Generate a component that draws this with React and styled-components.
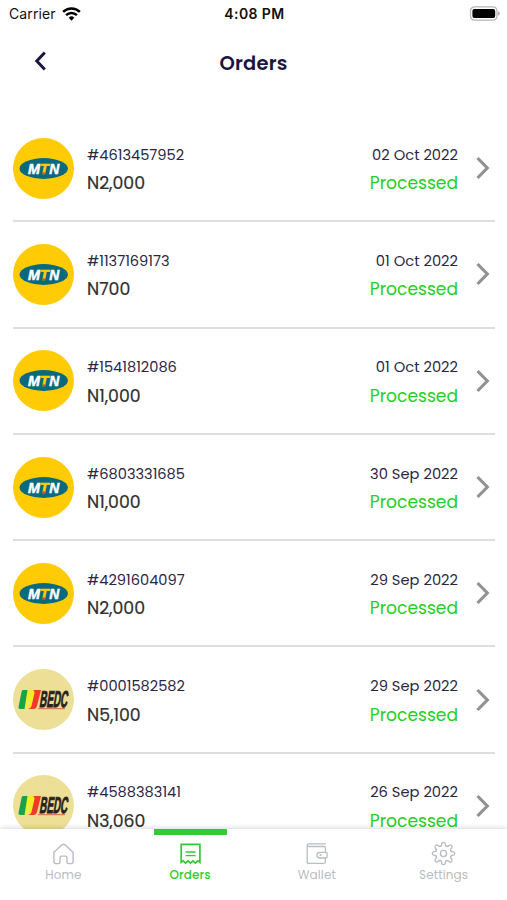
import React from "react";
import styled, { createGlobalStyle } from "styled-components";

const GlobalStyle = createGlobalStyle`
  * {
    box-sizing: border-box;
  }

  body {
    margin: 0;
    background-color: #fff;
    font-family: Poppins, Inter, "Open Sans", sans-serif;
  }
`

const Screen = styled.div`
  width: 507px;
  height: 900px;
  display: flex;
  flex-direction: column;
  overflow: hidden;
  background-color: #fff;
`

const StatusBar = styled.div`
  flex: 0 0 27px;
  display: grid;
  grid-template-columns: 1fr auto 1fr;
  align-items: center;
  padding: 0 7px 0 9px;
  color: #111;
  font-family: Inter, sans-serif;
  font-size: 14px;
`

const Carrier = styled.div`
  display: flex;
  align-items: center;
  gap: 6px;
  letter-spacing: 0.1px;
`

const Time = styled.div`
  font-weight: 600;
  letter-spacing: 0.4px;
`

const Battery = styled.div`
  display: flex;
  justify-content: flex-end;
`

const Header = styled.div`
  flex: 0 0 72px;
  display: grid;
  grid-template-columns: 1fr auto 1fr;
  align-items: center;
  padding: 0 34px;
`

const BackButton = styled.div`
  display: flex;
  margin-bottom: 4px;
  cursor: pointer;
`

const Title = styled.div`
  padding-top: 1px;
  color: #1a163d;
  font-size: 19.5px;
  font-weight: 600;
  letter-spacing: 0.2px;
`

const List = styled.div`
  flex: 1;
  min-height: 0;
  overflow: hidden;
  padding: 17px 12px 0 13px;
`

const Row = styled.div`
  height: 106.3px;
  display: flex;
  align-items: center;
  border-bottom: 2px solid #dedede;
`

const Logo = styled.div`
  flex: 0 0 61px;
  height: 61px;
  border-radius: 50%;
  background-color: ${(props) => props.$color};

  svg {
    display: block;
    overflow: visible;
  }
`

const Info = styled.div`
  flex: 1;
  display: flex;
  flex-direction: column;
  align-items: ${(props) => (props.$end ? "flex-end" : "flex-start")};
  padding: 2px 0 0 13px;
  line-height: 28.5px;
  white-space: nowrap;
`

const Detail = styled.div`
  color: #2a2745;
  font-size: ${(props) => (props.$date ? 14.7 : 14.6)}px;
`

const Amount = styled.div`
  color: #303030;
  font-size: 17.3px;
  -webkit-text-stroke: 0.2px #303030;
`

const Status = styled.div`
  color: #25cf25;
  font-size: 17.1px;
`

const Arrow = styled.div`
  flex: 0 0 37px;
  display: flex;
  padding-left: 18px;
`

const TabBar = styled.div`
  flex: 0 0 71px;
  display: grid;
  grid-template-columns: repeat(4, 1fr);
  position: relative;
  background-color: #fff;
  box-shadow: 0 -1px 5px rgba(0, 0, 0, 0.16);
`

const Tab = styled.div`
  display: flex;
  flex-direction: column;
  align-items: center;
  color: ${(props) => (props.$active ? "#2ecc32" : "#b9bcc3")};
  font-size: 12px;
  font-weight: ${(props) => (props.$active ? 500 : 400)};
  letter-spacing: 0.1px;
  line-height: 16px;
  cursor: pointer;

  &::before {
    content: "";
    width: 73px;
    height: 6px;
    margin-bottom: 6px;
    background-color: ${(props) => (props.$active ? "#30cb36" : "transparent")};
  }

  svg {
    margin-bottom: 1px;
  }
`

const orders = [
  { id: "#4613457952", amount: "N2,000", date: "02 Oct 2022", brand: "mtn" },
  { id: "#1137169173", amount: "N700", date: "01 Oct 2022", brand: "mtn" },
  { id: "#1541812086", amount: "N1,000", date: "01 Oct 2022", brand: "mtn" },
  { id: "#6803331685", amount: "N1,000", date: "30 Sep 2022", brand: "mtn" },
  { id: "#4291604097", amount: "N2,000", date: "29 Sep 2022", brand: "mtn" },
  { id: "#0001582582", amount: "N5,100", date: "29 Sep 2022", brand: "bedc" },
  { id: "#4588383141", amount: "N3,060", date: "26 Sep 2022", brand: "bedc" },
]

const MtnLogo = () => (
  <svg width="61" height="61" viewBox="0 0 61 61">
    <ellipse cx="30.7" cy="30.5" rx="24.2" ry="10.4" fill="#08697f" />
    <g fontFamily="Liberation Sans, sans-serif" fontWeight="700" fontStyle="italic" fontSize="14.5" strokeWidth="0.5">
      <text x="15" y="35.5" textLength="12" lengthAdjust="spacingAndGlyphs" fill="#fff" stroke="#fff">M</text>
      <text x="36.300" y="35.5" textLength="10" lengthAdjust="spacingAndGlyphs" fill="#fff" stroke="#fff">N</text>
      <text x="26.800" y="35.5" textLength="9" lengthAdjust="spacingAndGlyphs" fill="#fc0" stroke="#fc0">T</text>
    </g>
    <path d="M29.500 34.400h2.600l-.4 1.600h-2.500z" fill="#e0362c" />
  </svg>
)

const BedcLogo = () => (
  <svg width="61" height="61" viewBox="0 0 61 61">
    <path d="M10 21h7l-5 19H7.300q-2.200 0-1.700-2.500L8.500 23q.4-2 1.500-2z" fill="#16a34a" />
    <path d="M14.500 21H20q2.500 0 2 2.500L19 40q-3 .5-3.500-2.500l1-9q-2 4-3 11.500h-2z" fill="#f4ee20" />
    <path d="M20 21h8l-4 16q-.8 3-3.500 3H15q3-.5 3.500-3l3-13q.3-2-1.500-3z" fill="#ef3a2d" />
    <text transform="translate(26 37.800) skewX(-9)" fontFamily="Liberation Sans, sans-serif" fontWeight="700" fontSize="23" textLength="28" lengthAdjust="spacingAndGlyphs" fill="#27231d" stroke="#27231d" strokeWidth="0.9">BEDC</text>
    <path d="M25 39.700H52" stroke="#d9634a" strokeWidth="1" />
  </svg>
)

const HomeIcon = () => (
  <svg width="25" height="25" viewBox="0 0 25 25" fill="none" stroke="currentColor" strokeWidth="1.400" strokeLinejoin="round">
    <path d="M2.900 11.200 10.700 4q1.800-1.500 3.600 0l7.800 7.200v9.400q0 2-2 2h-2.400q-1.700 0-1.700-1.700v-4.200q0-1.600-1.600-1.600h-3.800Q9 15.100 9 16.700v4.200q0 1.700-1.700 1.700H4.900q-2 0-2-2z" />
  </svg>
)

const OrdersIcon = () => (
  <svg width="25" height="25" viewBox="0 0 25 25" fill="none" stroke="currentColor" strokeWidth="1.700">
    <path d="M3.200 3.300h18.700v18l-2-1.500-2.500 2.300-2.500-2.300-2.400 2.300-2.400-2.300-2.500 2.300-2.400-2.300-2 1.500z" />
    <path d="M7.600 11h10M7.600 14.600h10" strokeWidth="1.300" />
  </svg>
)

const WalletIcon = () => (
  <svg width="25" height="25" viewBox="0 0 25 25" fill="none" stroke="currentColor" strokeWidth="1.300" strokeLinejoin="round" strokeLinecap="round">
    <path d="M21.300 2.900H5.100q-1.900 0-1.900 1.300t1.900 1.300h15q1.300 0 1.300 1.300v4.500M21.400 17v3.800q0 1.500-1.500 1.500H4.700q-1.500 0-1.500-1.500V4.200" />
    <path d="M15.800 11.300h6q1.400 0 1.400 1.400v2.900q0 1.400-1.400 1.400h-6q-2.900-.3-2.900-2.850t2.900-2.850z" />
    <circle cx="16.500" cy="14.100" r=".5" />
  </svg>
)

const teeth = [0, 45, 90, 135, 180, 225, 270, 315]

const SettingsIcon = () => (
  <svg width="25" height="25" viewBox="0 0 25 25" fill="none" stroke="currentColor" strokeWidth="1.300" strokeLinejoin="round" strokeLinecap="round">
    {teeth.map((angle) => (
      <path
        key={angle}
        transform={`rotate(${angle} 12.500 12.500)`}
        d="M9.500 5.250 10.400 4.900 10.800 2.400q.2-1.100 1.700-1.100t1.700 1.100l.4 2.500.9.350q.9.300 1.600-.1"
      />
    ))}
    <circle cx="12.500" cy="12.500" r="3.100" />
  </svg>
)

const tabs = [
  { label: "Home", icon: <HomeIcon /> },
  { label: "Orders", icon: <OrdersIcon />, active: true },
  { label: "Wallet", icon: <WalletIcon /> },
  { label: "Settings", icon: <SettingsIcon /> },
]

const App = () => {
  return (
    <Screen>
      <GlobalStyle />
      <StatusBar>
        <Carrier>
          Carrier
          <svg width="19" height="14" viewBox="0 0 19 14" fill="none" stroke="#000" strokeWidth="2.500">
            <path d="M1.100 4.900a12 12 0 0 1 16.800 0" />
            <path d="M4.100 8.100a7.800 7.800 0 0 1 10.800 0" />
            <path d="M9.500 13.700 6.700 10.700a4 4 0 0 1 5.600 0z" fill="#000" stroke="none" />
          </svg>
        </Carrier>
        <Time>4:08 PM</Time>
        <Battery>
          <svg width="31" height="15" viewBox="0 0 31 15">
            <rect x="1.500" y=".9" width="26.500" height="13.200" rx="4" fill="#fff" stroke="#b5b5b5" strokeWidth="1.300" />
            <rect x="3.400" y="2.900" width="22.800" height="9.200" rx="2" fill="#000" />
            <path d="M29.100 5.300q1.700.6 1.700 2.200t-1.700 2.200z" fill="#aaa" />
          </svg>
        </Battery>
      </StatusBar>
      <Header>
        <BackButton>
          <svg width="13" height="20" viewBox="0 0 13 20" fill="none" stroke="#1a163d" strokeWidth="3">
            <path d="M10.800 1.500 2.800 10l8 8.500" />
          </svg>
        </BackButton>
        <Title>Orders</Title>
      </Header>
      <List>
        {orders.map((order) => (
          <Row key={order.id}>
            <Logo $color={order.brand === "mtn" ? "#ffcb05" : "#eddf95"}>
              {order.brand === "mtn" ? <MtnLogo /> : <BedcLogo />}
            </Logo>
            <Info>
              <Detail>{order.id}</Detail>
              <Amount>{order.amount}</Amount>
            </Info>
            <Info $end>
              <Detail $date>{order.date}</Detail>
              <Status>Processed</Status>
            </Info>
            <Arrow>
              <svg width="14" height="24" viewBox="0 0 14 24" fill="none" stroke="#929292" strokeWidth="3.200">
                <path d="M1.500 2 11.300 12l-9.800 10" />
              </svg>
            </Arrow>
          </Row>
        ))}
      </List>
      <TabBar>
        {tabs.map((tab) => (
          <Tab key={tab.label} $active={tab.active}>
            {tab.icon}
            {tab.label}
          </Tab>
        ))}
      </TabBar>
    </Screen>
  )
}

export default App
